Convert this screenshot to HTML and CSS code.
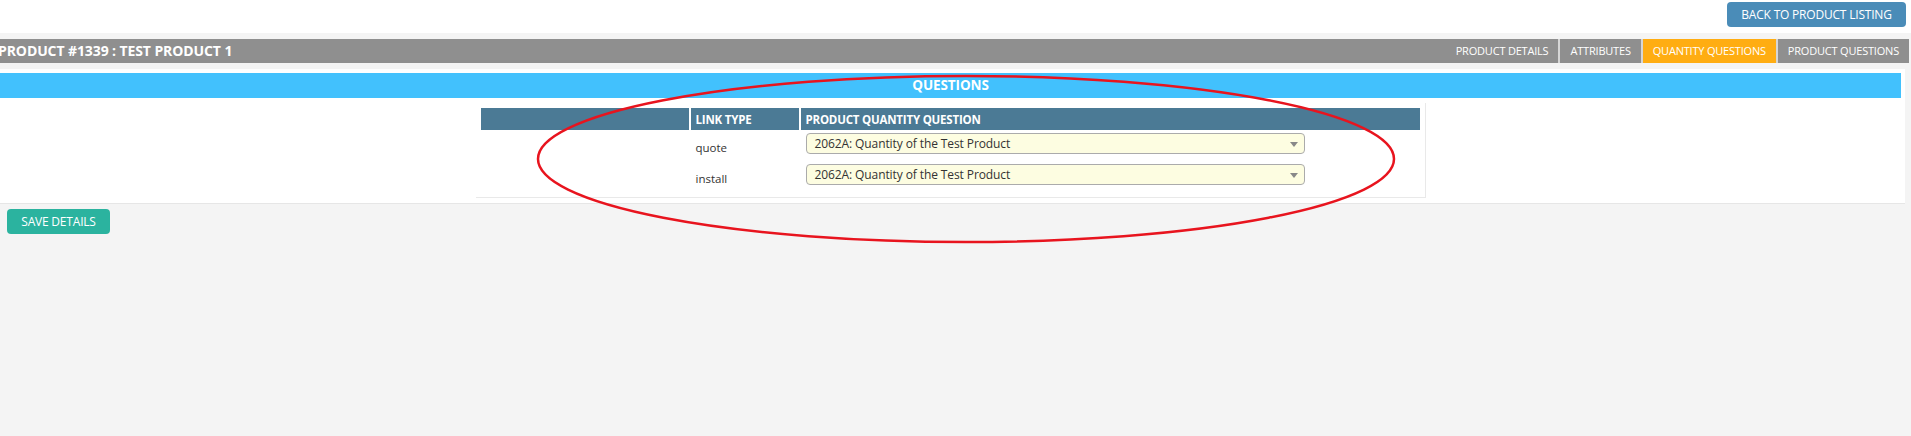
FILE: index.html
```html
<!DOCTYPE html>
<html>
<head>
<meta charset="utf-8">
<link rel="stylesheet" href="styles.css">
</head>
<body>
<header class="topbar">
  <button class="btn btn-back">BACK TO PRODUCT LISTING</button>
</header>
<main class="page">
  <div class="titlebar">
    <h1 class="title">PRODUCT #1339 : TEST PRODUCT 1</h1>
    <nav class="tabs">
      <span class="tab">PRODUCT DETAILS</span>
      <span class="tab">ATTRIBUTES</span>
      <span class="tab active">QUANTITY QUESTIONS</span>
      <span class="tab">PRODUCT QUESTIONS</span>
    </nav>
  </div>
  <section class="panel">
    <div class="panel-head">QUESTIONS</div>
    <div class="table-wrap">
      <table class="qtable">
        <thead>
          <tr><th class="c1"></th><th class="c2">LINK TYPE</th><th class="c3">PRODUCT QUANTITY QUESTION</th></tr>
        </thead>
        <tbody>
          <tr><td></td><td class="lt">quote</td><td class="sel"><div class="select">2062A: Quantity of the Test Product<span class="arrow"></span></div></td></tr>
          <tr><td></td><td class="lt">install</td><td class="sel"><div class="select">2062A: Quantity of the Test Product<span class="arrow"></span></div></td></tr>
        </tbody>
      </table>
    </div>
  </section>
  <button class="btn btn-save">SAVE DETAILS</button>
</main>
<svg class="annotation" width="1911" height="436" viewBox="0 0 1911 436">
  <ellipse cx="966" cy="159" rx="428" ry="83" fill="none" stroke="#e8141e" stroke-width="2.5"/>
</svg>
</body>
</html>
```

FILE: styles.css
```css
html, body {
  margin: 0;
  padding: 0;
}
body {
  background: #f4f4f4;
  font-family: "Open Sans", "Noto Sans", sans-serif;
  color: #333;
  width: 1911px;
  height: 436px;
  overflow: hidden;
  position: relative;
}
.topbar {
  background: #fff;
  height: 33px;
  display: flex;
  justify-content: flex-end;
  align-items: flex-start;
}
.btn {
  border: none;
  color: #fff;
  font-family: "Open Sans", sans-serif;
  font-size: 12px;
  height: 25px;
  padding: 0;
  border-radius: 4px;
  letter-spacing: -0.2px;
}
.btn-back {
  background: #4a8cb8;
  width: 179px;
  margin-top: 2px;
  margin-right: 5px;
}
.page {
  padding-top: 6px;
}
.titlebar {
  height: 24px;
  background: #8f8f8f;
  margin-right: 2px;
  display: flex;
  justify-content: space-between;
  align-items: stretch;
}
.title {
  margin: 0 0 0 -2px;
  font-size: 14px;
  font-weight: 700;
  color: #fff;
  line-height: 24px;
  letter-spacing: -0.1px;
}
.tabs {
  display: flex;
}
.tab {
  color: #fff;
  font-size: 11px;
  line-height: 24px;
  padding: 0 10px;
  border-left: 2px solid #d6d6d6;
  letter-spacing: -0.2px;
}
.tab:first-child {
  border-left: none;
}
.tab.active {
  background: #ffad12;
}
.panel {
  margin-top: 6px;
  margin-left: -4px;
  margin-right: 6px;
  background: #fff;
  padding: 4px 4px 5px 4px;
  border-bottom: 1px solid #e6e6e6;
}
.panel-head {
  background: #42c1fd;
  color: #fff;
  font-weight: 700;
  font-size: 13.5px;
  height: 25px;
  line-height: 25px;
  text-align: center;
  letter-spacing: -0.1px;
}
.table-wrap {
  width: 939px;
  margin: 5px auto 0;
  padding: 5px;
  border-right: 1px solid #e9e9e9;
  border-bottom: 1px solid #e9e9e9;
}
.qtable {
  border-collapse: separate;
  border-spacing: 2px 0;
  margin: 0 -2px;
  width: calc(100% + 4px);
}
.qtable th {
  background: #4b7a95;
  color: #fff;
  font-size: 11.5px;
  font-weight: 700;
  text-align: left;
  height: 22px;
  padding: 0 5px;
  letter-spacing: -0.2px;
}
.qtable th.c1 { width: 198px; }
.qtable th.c2 { width: 98px; }
.qtable td {
  padding: 0;
  vertical-align: top;
}
.qtable td.lt {
  padding: 10px 5px 5px;
  font-size: 11.5px;
  line-height: 16px;
  color: #333;
}
.qtable td.sel {
  padding: 3px 5px 7px;
}
.select {
  position: relative;
  height: 19px;
  border: 1px solid #ababab;
  border-radius: 4px;
  background: #fdfde1;
  font-size: 12px;
  line-height: 19px;
  padding-left: 8px;
  width: 489px;
  letter-spacing: -0.1px;
}
.arrow {
  position: absolute;
  right: 6px;
  top: 8px;
  width: 0;
  height: 0;
  border-left: 4px solid transparent;
  border-right: 4px solid transparent;
  border-top: 5px solid #888;
}
.btn-save {
  background: #2bb39f;
  width: 103px;
  margin: 5px 0 0 7px;
  font-size: 12px;
  display: block;
}
.annotation {
  position: absolute;
  left: 0;
  top: 0;
  pointer-events: none;
}
```
